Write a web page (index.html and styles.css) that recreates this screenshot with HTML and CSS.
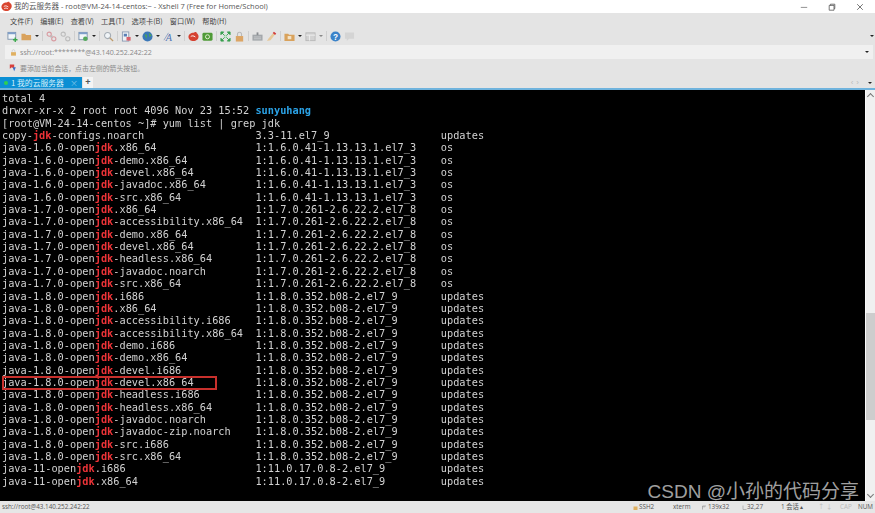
FILE: index.html
```html
<!DOCTYPE html>
<html lang="zh">
<head>
<meta charset="utf-8">
<title>Xshell 7</title>
<link rel="stylesheet" href="styles.css">
</head>
<body>
<div class="app">
  <header class="titlebar">
    <svg class="logo" viewBox="0 0 12 12"><path d="M.5 6.500C.5 3.500 3 1.500 6 1.500c1 0 1.500-.8 2.500-.8.700 0 1 .6.800 1.100 1.500.7 2.400 2 2.400 3.700 0 3-2.700 5.500-5.700 5.500S.5 9 .5 6.500z" fill="#d9452f"/><path d="M3 6c1.500-1 3-1 5 .5M3.500 8.300c1.500-.8 2.500-.8 4 .2" stroke="#fff" stroke-width=".9" fill="none"/></svg>
    <span class="title-text">我的云服务器 - root@VM-24-14-centos:~ - Xshell 7 (Free for Home/School)</span>
    <div class="winbtns">
      <svg viewBox="0 0 10 10"><path d="M1 5.500h8" stroke="#777" stroke-width="1"/></svg>
      <svg viewBox="0 0 10 10"><path d="M1.500 3h6v6h-6zM3 3V1.500h5.500V7H7.500" stroke="#555" fill="none"/></svg>
      <svg viewBox="0 0 10 10"><path d="M1.500 1.500l7 7M8.500 1.500l-7 7" stroke="#555"/></svg>
    </div>
  </header>
  <nav class="menubar">
    <span>文件(F)</span><span>编辑(E)</span><span>查看(V)</span><span>工具(T)</span><span>选项卡(B)</span><span>窗口(W)</span><span>帮助(H)</span>
  </nav>
  <div class="toolbar">
    <div class="tools">
      <svg class="ic" viewBox="0 0 12 12"><rect x="1" y="1.500" width="8.500" height="7.500" fill="#f2f6fa" stroke="#7e93ad"/><rect x="1" y="1.500" width="8.500" height="2" fill="#7e9fca"/><path d="M9 7v5M6.500 9.500h5" stroke="#3aa84a" stroke-width="1.500"/></svg>
      <svg class="ic" viewBox="0 0 12 12"><path d="M.5 3h4l1 1.300h5.500V10H.5z" fill="#d9a25c"/></svg><i class="caret"></i>
      <b class="sep"></b>
      <svg class="ic" viewBox="0 0 12 12"><circle cx="3.500" cy="3.500" r="2.300" fill="none" stroke="#d89aa0" stroke-width="1.200"/><circle cx="8.500" cy="8.500" r="2.300" fill="none" stroke="#d89aa0" stroke-width="1.200"/><path d="M5 7l2-2" stroke="#b9b9b9" stroke-width="1.500"/></svg>
      <svg class="ic" viewBox="0 0 12 12"><circle cx="3.500" cy="3.500" r="2.300" fill="none" stroke="#bcbcbc" stroke-width="1.200"/><circle cx="8.500" cy="8.500" r="2.300" fill="none" stroke="#bcbcbc" stroke-width="1.200"/></svg>
      <b class="sep"></b>
      <svg class="ic" viewBox="0 0 12 12"><rect x="1" y="1.500" width="9" height="8" fill="#f2f6fa" stroke="#7e93ad"/><rect x="1" y="1.500" width="9" height="2" fill="#7e9fca"/><circle cx="8" cy="8.500" r="2.500" fill="#54a95c"/></svg><i class="caret"></i>
      <b class="sep"></b>
      <svg class="ic" viewBox="0 0 12 12"><circle cx="5" cy="5" r="3.300" fill="#f0f4f7" stroke="#a5adb5" stroke-width="1.200"/><path d="M7.500 7.500l3.500 3.500" stroke="#bd9a6a" stroke-width="1.500"/></svg>
      <b class="sep"></b>
      <svg class="ic" viewBox="0 0 12 12"><rect x="1.500" y="1" width="7" height="10" fill="#eef1f5" stroke="#8b9cb3"/><rect x="3" y="3" width="3.500" height="3" fill="#5a7fb5"/><rect x="6" y="6.500" width="4.500" height="4" fill="#d8606a"/></svg><i class="caret"></i>
      <svg class="ic" viewBox="0 0 12 12"><circle cx="6" cy="6" r="5.500" fill="#3b78b8"/><path d="M3 3.500c2 0 3 1 2.500 2.500S4 8 5 10M7.500 2c1 1.500 2.500 1.500 3 3-.8 1-2 .5-2.500 2" fill="#4ea35a"/></svg><i class="caret"></i>
      <svg class="ic" viewBox="0 0 12 12"><text x="3" y="10.500" class="ic-a">A</text><path d="M1 10L6 2" stroke="#8ea4c4"/></svg><i class="caret"></i>
      <b class="sep"></b>
      <svg class="ic" viewBox="0 0 12 12"><path d="M.5 6.500C.5 4 3 2 6 2c1 0 1.500-.8 2.500-.8.700 0 1 .6.800 1.100C10.500 3 11.500 4.500 11.500 6c0 3-2.500 5-5.500 5S.5 9 .5 6.500z" fill="#d5402f"/><path d="M3 6c1.500-1 3-1 5 .5" stroke="#fff" fill="none"/></svg>
      <svg class="ic" viewBox="0 0 12 12"><rect x=".5" y="2" width="11" height="8.500" rx="1.500" fill="#4f9a37"/><circle cx="6" cy="6.300" r="2.200" fill="none" stroke="#e8f3d8"/></svg>
      <b class="sep"></b>
      <svg class="ic" viewBox="0 0 12 12"><rect x="4" y="4" width="4" height="4" fill="#bfe3c6"/><path d="M1 1h3L1 4zM11 1H8l3 3zM1 11h3l-3-3zM11 11H8l3-3zM2 2l3 3M10 2L7 5M2 10l3-3M10 10L7 7" fill="#37a04e" stroke="#37a04e"/></svg>
      <svg class="ic" viewBox="0 0 12 12"><rect x="2" y="5.500" width="8" height="6" fill="#dca565"/><path d="M3.800 5.500V3.500a2.200 2.200 0 0 1 4.400 0v2" fill="none" stroke="#b9b9b9" stroke-width="1.200"/></svg>
      <b class="sep"></b>
      <svg class="ic" viewBox="0 0 12 12"><rect x=".5" y="4" width="11" height="6.500" fill="#a3a7ab"/><rect x="5" y="1.500" width="2" height="3" fill="#8a8d91"/><path d="M2 6.500h8M2 8.500h8" stroke="#c9ccce"/></svg>
      <svg class="ic" viewBox="0 0 12 12"><path d="M1 11l2-3 5-6 2 1.500-5 6.500z" fill="#e6c89a"/><path d="M8 1.500l2.500 2" stroke="#d23b3b" stroke-width="2"/></svg>
      <b class="sep"></b>
      <svg class="ic" viewBox="0 0 12 12"><path d="M.5 3h4l1 1h6v7H.5z" fill="#d9a25c"/><rect x="4" y="5.500" width="4" height="3.500" fill="#f4e3c7"/></svg><i class="caret"></i>
      <svg class="ic" viewBox="0 0 12 12"><rect x="1" y="2" width="10" height="8.500" fill="#d2d2d2" stroke="#b9b9b9"/><path d="M1 4.500h10M5 4.500v6" stroke="#efefef"/></svg><i class="caret dim"></i>
      <b class="sep"></b>
      <svg class="ic" viewBox="0 0 12 12"><circle cx="6" cy="6" r="5.500" fill="#3b83c9"/><text x="6" y="9.500" class="ic-q">?</text></svg>
      <svg class="ic" viewBox="0 0 12 12"><path d="M1 1.500h10v7H5.500L3 11V8.500H1z" fill="#d4d4d4"/></svg>
    </div>
    <i class="caret end"></i>
  </div>
  <div class="addressbar">
    <svg class="lock" viewBox="0 0 10 10"><rect x="1.500" y="4.500" width="7" height="5" fill="#e0b060"/><path d="M3 4.500V3a2 2 0 0 1 4 0v1.500" fill="none" stroke="#c9c9c9"/></svg>
    <span>ssh://root:********@43.140.252.242:22</span>
    <i class="caret end"></i>
  </div>
  <div class="hintbar">
    <svg class="flag" viewBox="0 0 10 10"><path d="M1 .5h5.500V6L3.500 4.200 1 6z" fill="#d8403c"/><path d="M4.500 4h4L6.500 9z" fill="#3c6fc4"/></svg>
    <span>要添加当前会话，点击左侧的箭头按钮。</span>
  </div>
  <div class="tabbar">
    <div class="tab"><i class="dot"></i><span class="tab-name">1 我的云服务器</span><span class="tab-x">×</span></div>
    <div class="tab-add">+</div>
    <div class="tab-nav"><span>‹</span><span>›</span><i class="caret"></i></div>
  </div>
  <main class="session">
    <div class="terminal">
<div>total 4</div>
<div>drwxr-xr-x 2 root root 4096 Nov 23 15:52 <span class="dir">sunyuhang</span></div>
<div>[root@VM-24-14-centos ~]# yum list | grep jdk</div>
<div>copy-<em>jdk</em>-configs.noarch                  3.3-11.el7_9                  updates</div>
<div>java-1.6.0-open<em>jdk</em>.x86_64                1:1.6.0.41-1.13.13.1.el7_3    os</div>
<div>java-1.6.0-open<em>jdk</em>-demo.x86_64           1:1.6.0.41-1.13.13.1.el7_3    os</div>
<div>java-1.6.0-open<em>jdk</em>-devel.x86_64          1:1.6.0.41-1.13.13.1.el7_3    os</div>
<div>java-1.6.0-open<em>jdk</em>-javadoc.x86_64        1:1.6.0.41-1.13.13.1.el7_3    os</div>
<div>java-1.6.0-open<em>jdk</em>-src.x86_64            1:1.6.0.41-1.13.13.1.el7_3    os</div>
<div>java-1.7.0-open<em>jdk</em>.x86_64                1:1.7.0.261-2.6.22.2.el7_8    os</div>
<div>java-1.7.0-open<em>jdk</em>-accessibility.x86_64  1:1.7.0.261-2.6.22.2.el7_8    os</div>
<div>java-1.7.0-open<em>jdk</em>-demo.x86_64           1:1.7.0.261-2.6.22.2.el7_8    os</div>
<div>java-1.7.0-open<em>jdk</em>-devel.x86_64          1:1.7.0.261-2.6.22.2.el7_8    os</div>
<div>java-1.7.0-open<em>jdk</em>-headless.x86_64       1:1.7.0.261-2.6.22.2.el7_8    os</div>
<div>java-1.7.0-open<em>jdk</em>-javadoc.noarch        1:1.7.0.261-2.6.22.2.el7_8    os</div>
<div>java-1.7.0-open<em>jdk</em>-src.x86_64            1:1.7.0.261-2.6.22.2.el7_8    os</div>
<div>java-1.8.0-open<em>jdk</em>.i686                  1:1.8.0.352.b08-2.el7_9       updates</div>
<div>java-1.8.0-open<em>jdk</em>.x86_64                1:1.8.0.352.b08-2.el7_9       updates</div>
<div>java-1.8.0-open<em>jdk</em>-accessibility.i686    1:1.8.0.352.b08-2.el7_9       updates</div>
<div>java-1.8.0-open<em>jdk</em>-accessibility.x86_64  1:1.8.0.352.b08-2.el7_9       updates</div>
<div>java-1.8.0-open<em>jdk</em>-demo.i686             1:1.8.0.352.b08-2.el7_9       updates</div>
<div>java-1.8.0-open<em>jdk</em>-demo.x86_64           1:1.8.0.352.b08-2.el7_9       updates</div>
<div>java-1.8.0-open<em>jdk</em>-devel.i686            1:1.8.0.352.b08-2.el7_9       updates</div>
<div>java-1.8.0-open<em>jdk</em>-devel.x86_64          1:1.8.0.352.b08-2.el7_9       updates</div>
<div>java-1.8.0-open<em>jdk</em>-headless.i686         1:1.8.0.352.b08-2.el7_9       updates</div>
<div>java-1.8.0-open<em>jdk</em>-headless.x86_64       1:1.8.0.352.b08-2.el7_9       updates</div>
<div>java-1.8.0-open<em>jdk</em>-javadoc.noarch        1:1.8.0.352.b08-2.el7_9       updates</div>
<div>java-1.8.0-open<em>jdk</em>-javadoc-zip.noarch    1:1.8.0.352.b08-2.el7_9       updates</div>
<div>java-1.8.0-open<em>jdk</em>-src.i686              1:1.8.0.352.b08-2.el7_9       updates</div>
<div>java-1.8.0-open<em>jdk</em>-src.x86_64            1:1.8.0.352.b08-2.el7_9       updates</div>
<div>java-11-open<em>jdk</em>.i686                     1:11.0.17.0.8-2.el7_9         updates</div>
<div>java-11-open<em>jdk</em>.x86_64                   1:11.0.17.0.8-2.el7_9         updates</div>
    </div>
    <div class="scrollbar">
      <span class="arrow up"></span>
      <div class="track"><div class="thumb"></div></div>
      <span class="arrow down"></span>
    </div>
    <div class="redbox"></div>
    <div class="watermark">CSDN @小孙的代码分享</div>
  </main>
  <footer class="statusbar">
    <span class="st-left">ssh://root@43.140.252.242:22</span>
    <div class="st-right">
      <svg class="st-ic" viewBox="0 0 10 10"><rect x="1" y="3" width="8" height="7" fill="#e0b060"/></svg>
      <span class="st-ssh">SSH2</span>
      <span class="st-term">xterm</span>
      <svg class="st-ic" viewBox="0 0 10 10"><path d="M1 2v7M1 2h7M4 2v3" stroke="#777" fill="none"/></svg>
      <span class="st-size">139x32</span>
      <svg class="st-ic tight" viewBox="0 0 10 10"><path d="M2 1v8h7" stroke="#888" fill="none"/></svg>
      <span class="st-pos">32,27</span>
      <span class="st-sess">1 会话 ▴</span>
      <span class="st-arrows">↑ ↓</span>
      <span class="st-cap">CAP</span>
      <span class="st-num">NUM</span>
    </div>
  </footer>
</div>
</body>
</html>
```
FILE: styles.css
```css
* { box-sizing: border-box; }
html, body { margin: 0; padding: 0; }
body { width: 875px; height: 513px; overflow: hidden; font-family: "Noto Sans CJK SC", "Noto Sans", sans-serif; background: #e4e4e4; }
.app { display: flex; flex-direction: column; width: 875px; height: 513px; }
.titlebar { height: 13px; background: #fff; display: flex; align-items: center; padding-left: 1px; flex: none; }
.logo { width: 11px; height: 11px; margin-right: 2px; }
.title-text { font-size: 7.5px; line-height: 13px; color: #555; font-family: "Open Sans", "Noto Sans CJK SC", sans-serif; white-space: nowrap; }
.winbtns { margin-left: auto; display: flex; gap: 20px; padding-right: 11px; }
.winbtns svg { width: 8px; height: 8px; display: block; }
.menubar { height: 14px; flex: none; display: flex; gap: 7px; padding: 2px 0 0 10px; align-items: center; font-size: 7.200px; color: #444; background: #e4e4e4; white-space: nowrap; }
.toolbar { height: 18px; flex: none; display: flex; align-items: center; padding: 0 1px 0 7px; background: #e4e4e4; }
.tools { display: flex; align-items: center; gap: 3px; }
.ic { width: 11px; height: 11px; display: block; flex: none; }
.ic-a { font: italic 11px "Liberation Serif", serif; fill: #4f74b5; }
.ic-q { font: bold 9px "Liberation Sans", sans-serif; fill: #fff; text-anchor: middle; }
.caret { display: inline-block; width: 0; height: 0; border: 2px solid transparent; border-top: 2.500px solid #222; border-bottom: 0; flex: none; }
.caret.dim { border-top-color: #888; }
.caret.end { margin-left: auto; }
.sep { width: 1px; height: 10px; background: #cfcfcf; flex: none; }
.addressbar { height: 14px; flex: none; background: #f0f0f0; margin: 0 2px 0 5px; display: flex; align-items: center; padding: 0 4px 0 5px; font-size: 7.100px; color: #888; font-family: "Open Sans", sans-serif; white-space: nowrap; }
.lock { width: 7px; height: 7px; margin-right: 3px; }
.hintbar { height: 18px; flex: none; background: #e4e4e4; display: flex; align-items: center; padding: 0 0 0 9px; font-size: 6.900px; color: #8b8b8b; white-space: nowrap; }
.flag { width: 8px; height: 8px; margin-right: 3px; }
.tabbar { height: 11px; flex: none; display: flex; align-items: stretch; background: #e4e4e4; }
.tab { width: 82px; background: #0b8fd4; color: #d8f0fb; display: flex; align-items: center; padding-left: 4px; font-size: 7.800px; overflow: hidden; }
.dot { width: 4px; height: 4px; border-radius: 50%; background: #2fd04f; margin-right: 3px; flex: none; }
.tab-name { flex: 1; white-space: nowrap; }
.tab-x { margin-right: 4px; color: #7fc4e8; font-size: 8px; line-height: 11px; }
.tab-add { width: 10px; margin-left: 1px; background: #f4f4f4; color: #555; font: bold 9px/11px "Liberation Sans", sans-serif; text-align: center; }
.tab-nav { margin-left: auto; display: flex; gap: 3px; align-items: center; color: #bbb; font: 8px/11px "Liberation Sans", sans-serif; padding-right: 3px; }
.tab-nav .caret { margin-left: 6px; }
.session { position: relative; flex: 1; min-height: 0; display: flex; background: #000; border-top: 2px solid; border-image: linear-gradient(#6fb3dd, #1779b8) 1; }
.terminal { flex: 1; min-width: 0; padding: 2px 0 0 2px; color: #d2d2d2; font: 10.280px/12.350px "DejaVu Sans Mono", monospace; filter: blur(.3px); }
.terminal div { height: 12.350px; white-space: pre; }
.terminal em { font-style: normal; font-weight: bold; color: #ee3338; }
.dir { color: #2ba2e6; font-weight: bold; }
.scrollbar { width: 10px; flex: none; background: #f0f0f0; border-left: 1px solid #fafafa; display: flex; flex-direction: column; align-items: center; }
.track { flex: 1; width: 100%; padding-top: 212px; }
.thumb { height: 107px; background: #cdcdcd; }
.arrow { flex: none; height: 11px; width: 100%; position: relative; }
.arrow::after { content: ""; position: absolute; left: 2px; width: 4px; height: 4px; border: solid #777; border-width: 1px 0 0 1px; }
.arrow.up::after { top: 4px; transform: rotate(45deg); }
.arrow.down::after { top: 2px; transform: rotate(225deg); }
.redbox { position: absolute; left: 2px; top: 286px; width: 215px; height: 14px; border: 2px solid #c8302c; }
.watermark { position: absolute; right: 16px; bottom: -3px; color: rgba(255,255,255,.64); font-size: 19px; line-height: 24px; font-family: "Liberation Sans", "Noto Sans CJK SC", sans-serif; white-space: nowrap; }
.statusbar { height: 12px; flex: none; display: flex; align-items: center; justify-content: space-between; background: #e6e6e6; font-size: 6.300px; line-height: 12px; color: #555; padding-left: 2px; font-family: "Open Sans", "Noto Sans CJK SC", sans-serif; white-space: nowrap; }
.st-right { display: flex; align-items: center; }
.st-ic { width: 5px; height: 5px; margin-right: 1px; flex: none; }
.st-ic.tight { margin-right: 0; }
.st-ssh { width: 34px; }
.st-term { width: 29px; }
.st-size { width: 34px; }
.st-pos { width: 34px; }
.st-sess { width: 37px; }
.st-arrows { width: 22px; color: #bbb; }
.st-cap { width: 18px; color: #bbb; }
.st-num { width: 17px; }
```
